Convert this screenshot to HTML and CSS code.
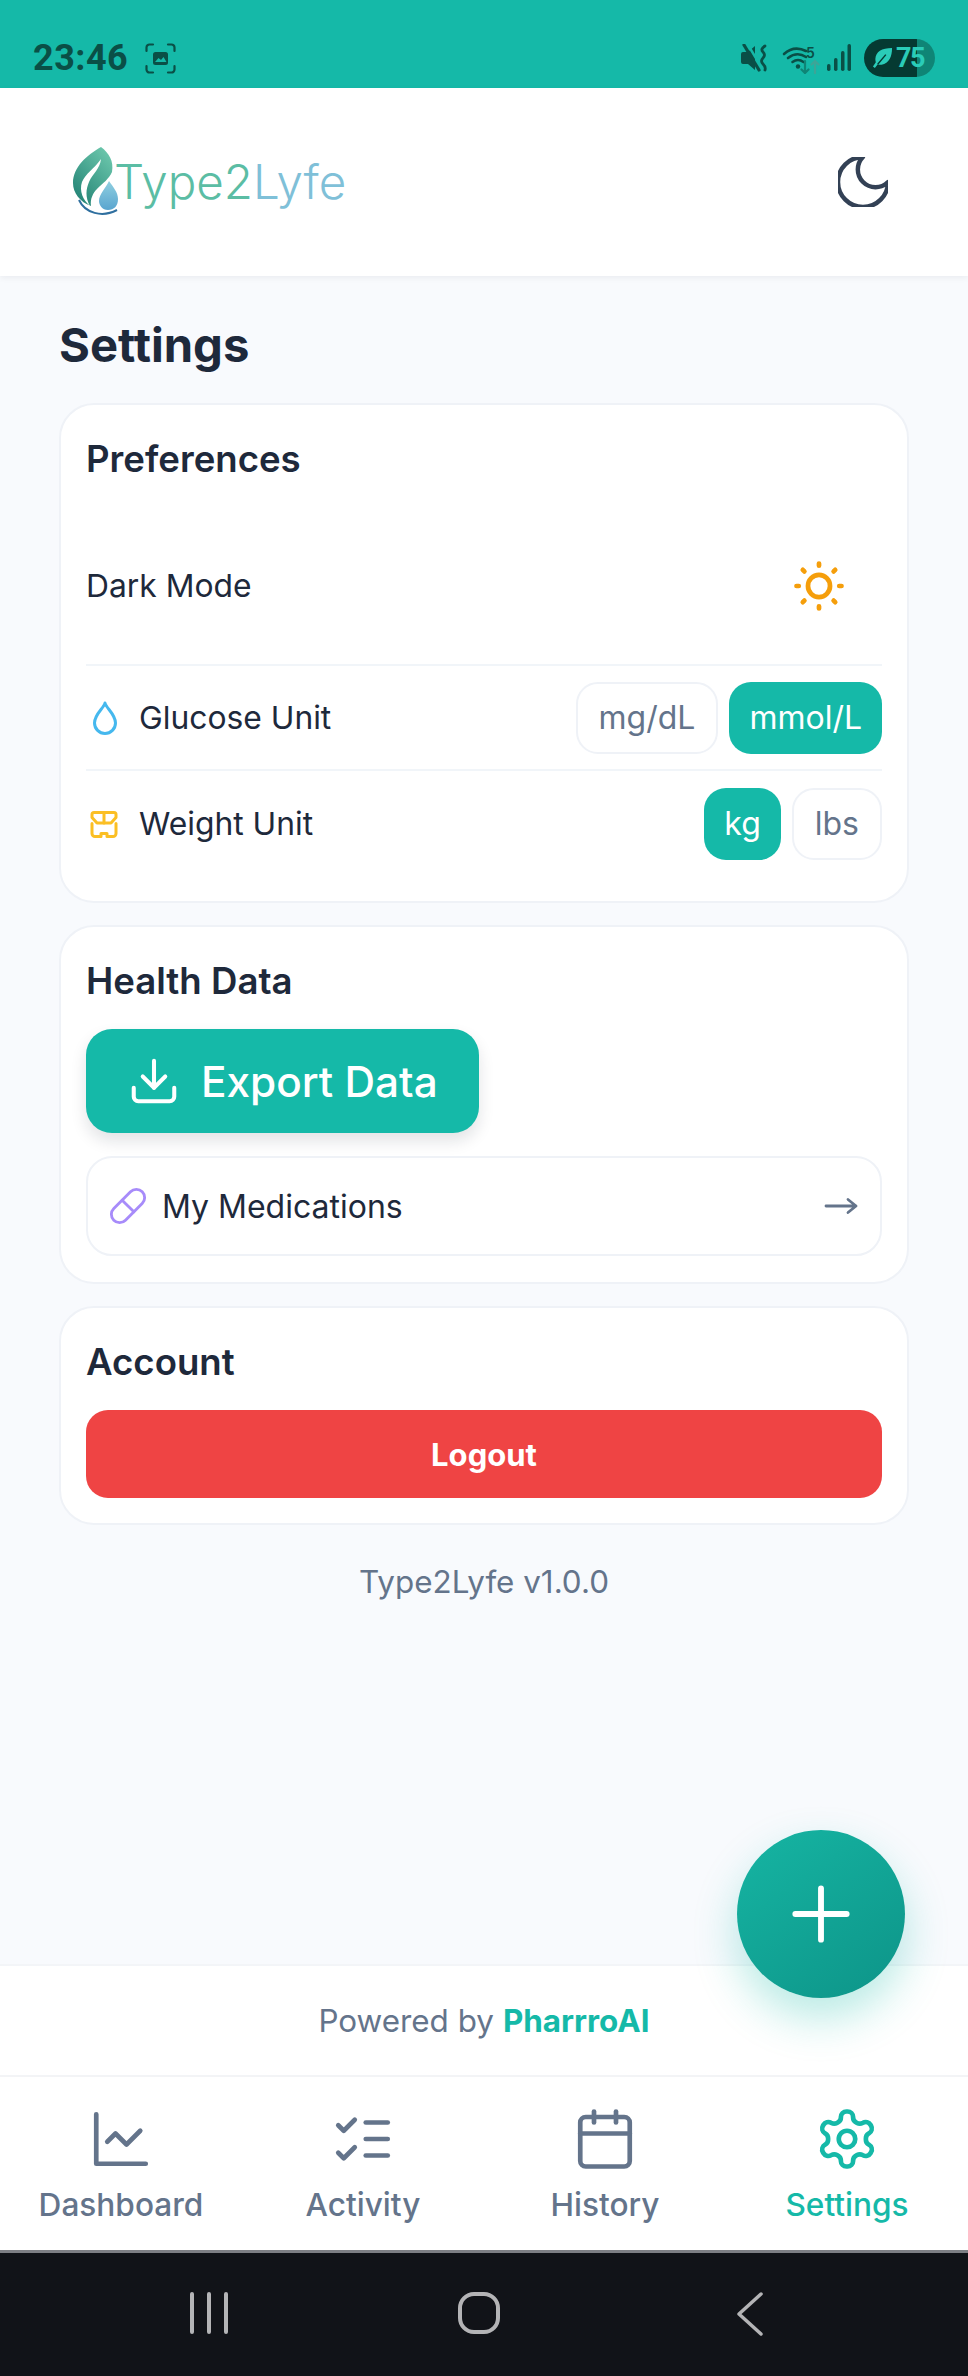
FILE: index.html
```html
<!DOCTYPE html>
<html lang="en">
<head>
    <meta charset="UTF-8">
    <meta name="viewport" content="width=device-width, initial-scale=1.0">
    <title>Type2Lyfe - Settings</title>
    <link rel="stylesheet" href="styles.css">
</head>
<body>
    <!-- Barra de status do aparelho -->
    <div class="status-bar">
        <div class="status-left">
            <span class="status-time">23:46</span>
            <svg class="status-shot" viewBox="0 0 31 31" fill="none" stroke="#0a4f46" stroke-width="2.2" stroke-linecap="round">
                <path d="M1.5 8V4.500a3 3 0 0 1 3-3H8M23 1.500h3.500a3 3 0 0 1 3 3V8M29.500 23v3.500a3 3 0 0 1-3 3H23M8 29.500H4.500a3 3 0 0 1-3-3V23"/>
                <rect x="8" y="9" width="15" height="13" rx="2.500" fill="#0a4f46" stroke="none"/>
                <path d="M10 19l3.500-4 2.500 2 2.500-3 3 5z" fill="#15b9a8" stroke="none"/>
            </svg>
        </div>
        <div class="status-right">
            <svg class="status-mute" viewBox="0 0 27 28" fill="none">
                <path d="M0 10q0-2 2-2h5L14 2v24l-7-6H2q-2 0-2-2z" fill="#0a4f46"/>
                <path d="M6.500 0l15 25" stroke="#15b9a8" stroke-width="2.500"/>
                <path d="M3 1l15 25" stroke="#0a4f46" stroke-width="3.200" stroke-linecap="round"/>
                <path d="M24 2q-5 3-2 6t0 6 0 6 2 6" stroke="#0a4f46" stroke-width="2.800" stroke-linecap="round"/>
            </svg>
            <svg class="status-wifi" viewBox="0 -3 38 31" fill="none" stroke-linecap="round">
                <path d="M2 8Q12-1 24 5M6 12q9-7 18-1M10.500 16q5.500-4 11 0" stroke="#0a4f46" stroke-width="2.600"/>
                <circle cx="16" cy="20.500" r="2.200" fill="#0a4f46"/>
                <path d="M23 15v12m-3.500-3.500L23 27l3.500-3.500" stroke="#0f8576" stroke-width="2.200"/>
                <path d="M33 27V15m-3.500 3.500L33 15l3.500 3.500" stroke="#3da597" stroke-width="2.200"/>
                <text x="24" y="11.500" class="wifi-five">5</text>
            </svg>
            <svg class="status-signal" viewBox="0 0 26 28" fill="#0a4f46">
                <rect x="1" y="20" width="3.500" height="7" rx="1.700"/>
                <rect x="8" y="14" width="3.500" height="13" rx="1.700"/>
                <rect x="15" y="7" width="3.500" height="20" rx="1.700"/>
                <rect x="21.500" y="0" width="3.500" height="27" rx="1.700"/>
            </svg>
            <div class="status-battery">
                <svg class="battery-leaf" viewBox="0 0 22 23" fill="#2accb8">
                    <path d="M21 1C10 1 4 5 3.500 12.500c0 1.500.2 2.500.5 3.500L1 20.500 3 22l3-4c1 .5 2.500.8 4 .5C18 17 21 10 21 1z"/>
                    <path d="M6 18L14.500 8" stroke="#053a32" stroke-width="1.500"/>
                </svg>
                <span>75</span>
            </div>
        </div>
    </div>

    <!-- Cabeçalho -->
    <header class="top-bar">
        <div class="logo">
            <svg class="logo-mark" viewBox="0 0 47 70">
                <defs>
                    <linearGradient id="leafGrad" x1="0.8" y1="0" x2="0.1" y2="1">
                        <stop offset="0" stop-color="#6cc7ac"/>
                        <stop offset="1" stop-color="#1f7f72"/>
                    </linearGradient>
                    <linearGradient id="dropGrad" x1="0" y1="0" x2="0" y2="1">
                        <stop offset="0" stop-color="#8fcfe0"/>
                        <stop offset="1" stop-color="#5aa5cf"/>
                    </linearGradient>
                </defs>
                <path d="M28 0C36 6 41 14 39 25c-3 7-9 11-15 17-4 4-7 10-6 17C7 55 0 46 0 36 0 20 14 8 28 0z" fill="url(#leafGrad)"/>
                <path d="M28 12c-1 10-8 14-12 23-3 7-4 15 1 24-7-6-11-15-8-24 3-8 12-13 19-23z" fill="#fff"/>
                <path d="M36 34c4 6 9 11 9 18 0 7-4 11-10 11-6 0-9-5-9-9 0-7 7-13 10-20z" fill="url(#dropGrad)"/>
                <path d="M6 53c6 13 23 18 38 10" fill="none" stroke="#2f6f9f" stroke-width="2"/>
            </svg>
            <span class="logo-text"><span class="logo-green">Type2</span><span class="logo-blue">Lyfe</span></span>
        </div>
        <svg class="moon-icon" viewBox="3 3 18 18" fill="none" stroke="#334155" stroke-width="1.600" stroke-linecap="round" stroke-linejoin="round">
            <path d="M12 3a6 6 0 0 0 9 9 9 9 0 1 1-9-9Z"/>
        </svg>
    </header>

    <!-- Conteúdo -->
    <main class="content">
        <h1>Settings</h1>

        <section class="card">
            <h2>Preferences</h2>
            <div class="row row-dark">
                <span class="row-label">Dark Mode</span>
                <svg class="sun-icon" viewBox="0 0 24 24" fill="none" stroke="#f59e0b" stroke-width="2.100" stroke-linecap="round">
                    <circle cx="12" cy="12" r="4.900"/>
                    <path d="M12 2v1M12 21v1M2 12h1M21 12h1M4.800 4.800l.7.7M18.500 18.500l.7.7M4.800 19.200l.7-.7M18.500 5.500l.7-.7"/>
                </svg>
            </div>
            <div class="row">
                <span class="row-label">
                    <svg class="row-icon" viewBox="-5 0 38 36" fill="none" stroke="#45b8ee" stroke-width="3" stroke-linecap="round" stroke-linejoin="round">
                        <path d="M14 3c1 5 10.500 11 10.500 20a10.500 10.500 0 0 1-21 0C3.500 14 13 8 14 3z"/>
                    </svg>
                    Glucose Unit
                </span>
                <div class="unit-group">
                    <button class="unit-btn">mg/dL</button>
                    <button class="unit-btn active">mmol/L</button>
                </div>
            </div>
            <div class="row row-last">
                <span class="row-label">
                    <svg class="row-icon" viewBox="-4 -3.500 38 36" fill="none" stroke="#fbbf24" stroke-width="3" stroke-linecap="round" stroke-linejoin="round">
                        <path d="M4 3h20a2 2 0 0 1 2 2v3l-5 5.500H7L2 8V5a2 2 0 0 1 2-2z"/>
                        <path d="M14 3v10.500"/>
                        <path d="M2 14v10a3 3 0 0 0 3 3h6v-3h6v3h6a3 3 0 0 0 3-3V14"/>
                    </svg>
                    Weight Unit
                </span>
                <div class="unit-group">
                    <button class="unit-btn active">kg</button>
                    <button class="unit-btn">lbs</button>
                </div>
            </div>
        </section>

        <section class="card">
            <h2>Health Data</h2>
            <button class="export-btn">
                <svg class="export-icon" viewBox="0 0 24 24" fill="none" stroke="#fff" stroke-width="1.800" stroke-linecap="round" stroke-linejoin="round">
                    <path d="M21 15v4a2 2 0 0 1-2 2H5a2 2 0 0 1-2-2v-4"/>
                    <path d="M7 10l5 5 5-5"/>
                    <path d="M12 15V3"/>
                </svg>
                Export Data
            </button>
            <div class="med-row">
                <span class="med-label">
                    <svg class="med-icon" viewBox="0 0 24 24" fill="none" stroke="#a78bfa" stroke-width="1.700" stroke-linecap="round" stroke-linejoin="round">
                        <path d="m10.500 20.500 10-10a4.950 4.950 0 1 0-7-7l-10 10a4.950 4.950 0 1 0 7 7Z"/>
                        <path d="m8.500 8.500 7 7"/>
                    </svg>
                    My Medications
                </span>
                <svg class="arrow-icon" viewBox="0 0 34 18" fill="none" stroke="#64748b" stroke-width="2.800" stroke-linecap="round" stroke-linejoin="round">
                    <path d="M2 9h30M24 2.500l8 6.500-8 6.500"/>
                </svg>
            </div>
        </section>

        <section class="card">
            <h2>Account</h2>
            <button class="logout-btn">Logout</button>
        </section>

        <p class="version">Type2Lyfe v1.0.0</p>

        <button class="fab" aria-label="Add">
            <svg class="fab-icon" viewBox="0 0 24 24" fill="none" stroke="#fff" stroke-width="1.600" stroke-linecap="round">
                <path d="M5 12h14M12 5v14"/>
            </svg>
        </button>
    </main>

    <!-- Rodapé -->
    <div class="powered">Powered by <strong>PharrroAI</strong></div>

    <nav class="tab-bar">
        <a class="tab">
            <svg class="tab-icon" viewBox="0 0 24 24"><path d="M3 3v18h18"/><path d="m19 9-5 5-4-4-3 3"/></svg>
            Dashboard
        </a>
        <a class="tab">
            <svg class="tab-icon" viewBox="0 0 24 24"><path d="m3 17 2 2 4-4"/><path d="m3 7 2 2 4-4"/><path d="M13 6h8"/><path d="M13 12h8"/><path d="M13 18h8"/></svg>
            Activity
        </a>
        <a class="tab">
            <svg class="tab-icon" viewBox="0 0 24 24"><path d="M8 2v4"/><path d="M16 2v4"/><rect x="3" y="4" width="18" height="18" rx="2"/><path d="M3 10h18"/></svg>
            History
        </a>
        <a class="tab tab-active">
            <svg class="tab-icon" viewBox="0 0 24 24"><path d="M12.220 2h-.44a2 2 0 0 0-2 2v.18a2 2 0 0 1-1 1.730l-.43.25a2 2 0 0 1-2 0l-.15-.08a2 2 0 0 0-2.730.73l-.22.38a2 2 0 0 0 .73 2.730l.15.1a2 2 0 0 1 1 1.720v.51a2 2 0 0 1-1 1.740l-.15.09a2 2 0 0 0-.73 2.730l.22.38a2 2 0 0 0 2.730.73l.15-.08a2 2 0 0 1 2 0l.43.25a2 2 0 0 1 1 1.730V20a2 2 0 0 0 2 2h.44a2 2 0 0 0 2-2v-.18a2 2 0 0 1 1-1.730l.43-.25a2 2 0 0 1 2 0l.15.08a2 2 0 0 0 2.730-.73l.22-.39a2 2 0 0 0-.73-2.730l-.15-.08a2 2 0 0 1-1-1.740v-.5a2 2 0 0 1 1-1.740l.15-.09a2 2 0 0 0 .73-2.730l-.22-.38a2 2 0 0 0-2.730-.73l-.15.08a2 2 0 0 1-2 0l-.43-.25a2 2 0 0 1-1-1.730V4a2 2 0 0 0-2-2z"/><circle cx="12" cy="12" r="3"/></svg>
            Settings
        </a>
    </nav>

    <!-- Teclas do Android -->
    <div class="nav-keys">
        <svg class="key-recent" viewBox="0 0 38 42" fill="none" stroke="#b4b4b6" stroke-width="4" stroke-linecap="round">
            <path d="M2 2v38M19 2v38M36 2v38"/>
        </svg>
        <svg class="key-home" viewBox="0 0 42 42" fill="none" stroke="#b4b4b6" stroke-width="4">
            <rect x="2" y="2" width="38" height="38" rx="14"/>
        </svg>
        <svg class="key-back" viewBox="0 0 26 44" fill="none" stroke="#b4b4b6" stroke-width="3.500" stroke-linecap="round" stroke-linejoin="round">
            <path d="M24 2 2 22l22 20"/>
        </svg>
    </div>
</body>
</html>
```

FILE: styles.css
```css
/* Estilos globais */
body {
    margin: 0;
    width: 968px;
    height: 2376px;
    overflow: hidden;
    display: flex;
    flex-direction: column;
    font-family: Inter, "Liberation Sans", sans-serif;
    color: #1e293b;
    background-color: #f8fafd;
}

button {
    font-family: inherit;
    cursor: pointer;
}

/* Barra de status */
.status-bar {
    height: 88px;
    flex-shrink: 0;
    box-sizing: border-box;
    padding: 39px 33px 0 33px;
    display: flex;
    justify-content: space-between;
    align-items: flex-start;
    background-color: #15b9a8;
}

.status-left {
    display: flex;
    align-items: center;
    gap: 17px;
}

.status-time {
    font-family: Roboto, sans-serif;
    font-size: 36px;
    font-weight: 700;
    line-height: 38px;
    letter-spacing: 0.5px;
    color: #0a4f46;
}

.status-shot {
    width: 31px;
    height: 31px;
}

.status-right {
    display: flex;
    align-items: center;
    height: 38px;
}

.status-mute {
    width: 27px;
    height: 28px;
    margin-right: 14px;
}

.status-wifi {
    width: 38px;
    height: 31px;
    margin-right: 6px;
}

.wifi-five {
    font-family: Inter, sans-serif;
    font-size: 14px;
    font-weight: 600;
    fill: #0a4f46;
    stroke: none;
}

.status-signal {
    width: 26px;
    height: 28px;
    margin-right: 12px;
}

.status-battery {
    width: 71px;
    height: 38px;
    box-sizing: border-box;
    padding-left: 8px;
    border-radius: 19px;
    display: flex;
    align-items: center;
    gap: 3px;
    font-family: Roboto, sans-serif;
    font-size: 27px;
    font-weight: 700;
    letter-spacing: -1.5px;
    color: #2accb8;
    background: linear-gradient(90deg, #053a32 75%, #0f8576 75%);
}

.battery-leaf {
    width: 21px;
    height: 22px;
}

/* Cabeçalho */
.top-bar {
    height: 188px;
    flex-shrink: 0;
    box-sizing: border-box;
    padding: 0 80px 0 73px;
    display: flex;
    justify-content: space-between;
    align-items: center;
    background-color: #fff;
    box-shadow: 0 2px 6px rgba(15, 23, 42, 0.06);
    position: relative;
}

.logo {
    display: flex;
    align-items: center;
    margin-top: -1px;
}

.logo-mark {
    width: 47px;
    height: 70px;
}

.logo-text {
    font-size: 47.500px;
    font-weight: 300;
    margin-left: -6px;
}

.logo-green {
    color: #5bbda4;
}

.logo-blue {
    color: #7fc0d8;
}

.moon-icon {
    width: 50px;
    height: 50px;
}

/* Conteúdo */
.content {
    flex: 1;
    position: relative;
    box-sizing: border-box;
    padding: 40px 59px 0;
}

h1 {
    margin: 0 0 29px;
    font-size: 47.200px;
    font-weight: 700;
    line-height: 58px;
}

.card {
    margin-bottom: 22px;
    padding: 32px 25px 25px;
    border: 2px solid #eff2f7;
    border-radius: 35px;
    background-color: #fff;
}

.card h2 {
    margin: 0 0 26px;
    font-size: 36.600px;
    font-weight: 600;
    line-height: 44px;
}

.row {
    height: 103px;
    display: flex;
    justify-content: space-between;
    align-items: center;
    border-bottom: 2px solid #f1f5f9;
}

.row-dark {
    height: 157px;
}

.row-last {
    height: 105px;
    border-bottom: none;
}

.row-label {
    display: flex;
    align-items: center;
    font-size: 31.800px;
    color: #1e293b;
}

.row-icon {
    width: 38px;
    height: 36px;
    margin-right: 15px;
}

.sun-icon {
    width: 54px;
    height: 54px;
    margin-right: 36px;
}

.unit-group {
    display: flex;
    gap: 11px;
}

.unit-btn {
    height: 72px;
    box-sizing: border-box;
    padding: 0 21px;
    border: 2px solid #eff2f7;
    border-radius: 22px;
    font-size: 32px;
    color: #64748b;
    background-color: #fff;
}

.unit-btn.active {
    padding: 0 20px;
    color: #fff;
    border: none;
    background-color: #15b9a8;
}

.export-btn {
    display: flex;
    align-items: center;
    gap: 20px;
    width: 393px;
    height: 104px;
    padding: 0 0 0 41px;
    border: none;
    border-radius: 26px;
    font-size: 42.300px;
    font-weight: 500;
    color: #fff;
    background-color: #15b9a8;
    box-shadow: 0 8px 16px rgba(15, 23, 42, 0.12);
}

.export-icon {
    width: 54px;
    height: 54px;
    flex-shrink: 0;
}

.med-row {
    height: 100px;
    box-sizing: border-box;
    margin: 23px 0 1px;
    padding: 0 22px 0 20px;
    display: flex;
    justify-content: space-between;
    align-items: center;
    border: 2px solid #eff2f7;
    border-radius: 26px;
}

.med-label {
    display: flex;
    align-items: center;
    font-size: 32px;
    font-weight: 400;
}

.med-icon {
    width: 40px;
    height: 40px;
    margin-right: 14px;
}

.arrow-icon {
    width: 34px;
    height: 18px;
}

.logout-btn {
    display: block;
    width: 100%;
    height: 88px;
    border: none;
    border-radius: 22px;
    font-size: 31px;
    font-weight: 700;
    color: #fff;
    background-color: #ef4444;
}

.version {
    margin: 35px 0 0;
    text-align: center;
    font-size: 31.400px;
    line-height: 44px;
    color: #64748b;
}

/* Botão flutuante sobre o conteúdo */
.fab {
    position: absolute;
    right: 63px;
    top: 1554px;
    width: 168px;
    height: 168px;
    padding: 0;
    border: none;
    border-radius: 50%;
    display: flex;
    justify-content: center;
    align-items: center;
    background: linear-gradient(145deg, #16b5a3, #0d9488);
    box-shadow: 0 20px 44px rgba(20, 184, 166, 0.3);
    z-index: 2;
}

.fab-icon {
    width: 88px;
    height: 88px;
}

/* Rodapé */
.powered {
    height: 111px;
    flex-shrink: 0;
    box-sizing: border-box;
    display: flex;
    justify-content: center;
    align-items: center;
    gap: 9px;
    border-top: 2px solid #f3f5f8;
    font-size: 31.400px;
    color: #64748b;
    background-color: #fff;
}

.powered strong {
    font-weight: 700;
    color: #15b9a8;
}

.tab-bar {
    height: 175px;
    flex-shrink: 0;
    box-sizing: border-box;
    padding-top: 29px;
    display: grid;
    grid-template-columns: repeat(4, 1fr);
    align-items: start;
    border-top: 2px solid #f3f4f6;
    background-color: #fff;
}

.tab {
    display: flex;
    flex-direction: column;
    align-items: center;
    gap: 13px;
    font-size: 31.600px;
    font-weight: 500;
    color: #64748b;
}

.tab-active {
    color: #15b9a8;
}

.tab-icon {
    width: 66px;
    height: 66px;
    fill: none;
    stroke: currentColor;
    stroke-width: 1.700;
    stroke-linecap: round;
    stroke-linejoin: round;
}

/* Teclas do Android */
.nav-keys {
    height: 126px;
    flex-shrink: 0;
    box-sizing: border-box;
    padding: 39px 0 0 190px;
    display: flex;
    align-items: flex-start;
    border-top: 3px solid #7d7f84;
    background-color: #111318;
}

.key-recent {
    width: 38px;
    height: 42px;
}

.key-home {
    width: 42px;
    height: 42px;
    margin-left: 230px;
}

.key-back {
    width: 26px;
    height: 44px;
    margin-left: 237px;
}
```
